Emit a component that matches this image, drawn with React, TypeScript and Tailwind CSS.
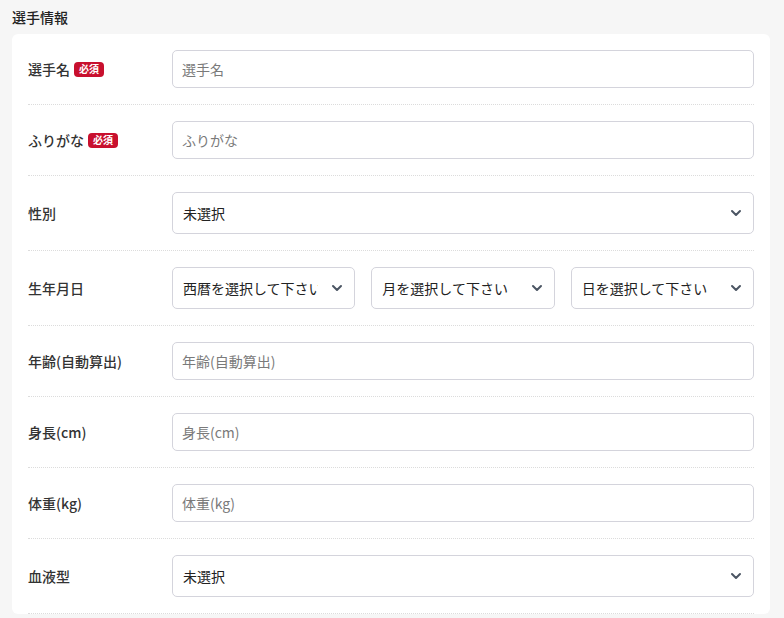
import React from 'react';

const FONT = { fontFamily: '"Noto Sans CJK JP", "Noto Sans", sans-serif' };

// 下向きシェブロン
const Chevron = () => (
  <svg
    className="pointer-events-none absolute right-[12px] top-1/2 -translate-y-1/2"
    width="12"
    height="12"
    viewBox="0 0 12 12"
    fill="none"
  >
    <path d="M2 4l4 4 4-4" stroke="#4b5563" strokeWidth="2" strokeLinecap="round" strokeLinejoin="round" />
  </svg>
);

const Required = () => (
  <span className="ml-[4px] inline-flex h-[15px] items-center rounded-[4px] bg-[#c8102e] px-[5px] text-[10px] font-bold leading-none text-white">
    必須
  </span>
);

const TextInput = ({ placeholder }: { placeholder: string }) => (
  <input
    type="text"
    placeholder={placeholder}
    className="h-[38px] w-full rounded-[5px] border border-[#d4d4dc] bg-white px-[9px] text-[14px] text-[#222] placeholder:text-[#7a7a7a] focus:outline-none"
    style={FONT}
  />
);

const Select = ({ options }: { options: string[] }) => (
  <div className="relative w-full">
    <select
      className="h-[42px] w-full appearance-none overflow-hidden rounded-[5px] border border-[#d4d4dc] bg-white pl-[10px] pr-[36px] text-[14px] text-[#222] focus:outline-none"
      style={FONT}
      defaultValue={options[0]}
    >
      {options.map((o) => (
        <option key={o}>{o}</option>
      ))}
    </select>
    <Chevron />
  </div>
);

const Row = ({ label, required, children }: { label: string; required?: boolean; children: React.ReactNode }) => (
  <div className="flex items-center border-b border-dotted border-[#dcdcdc] py-[16px]">
    <div className="flex w-[144px] shrink-0 items-center text-[14px] font-medium text-[#333]">
      {label}
      {required && <Required />}
    </div>
    <div className="flex-1">{children}</div>
  </div>
);

export default function App() {
  return (
    <div className="min-h-[618px] bg-[#f6f6f6] pl-[12px] pr-[14px] pt-[7px]" style={FONT}>
      <h2 className="mb-[7px] text-[14px] font-medium leading-[20px] text-[#222]">選手情報</h2>
      <div className="rounded-[6px] bg-white px-[16px]">
        <Row label="選手名" required>
          <TextInput placeholder="選手名" />
        </Row>
        <Row label="ふりがな" required>
          <TextInput placeholder="ふりがな" />
        </Row>
        <Row label="性別">
          <Select options={['未選択', '男性', '女性']} />
        </Row>
        <Row label="生年月日">
          <div className="grid grid-cols-3 gap-[16px]">
            <Select options={['西暦を選択して下さい']} />
            <Select options={['月を選択して下さい']} />
            <Select options={['日を選択して下さい']} />
          </div>
        </Row>
        <Row label="年齢(自動算出)">
          <TextInput placeholder="年齢(自動算出)" />
        </Row>
        <Row label="身長(cm)">
          <TextInput placeholder="身長(cm)" />
        </Row>
        <Row label="体重(kg)">
          <TextInput placeholder="体重(kg)" />
        </Row>
        <Row label="血液型">
          <Select options={['未選択', 'A型', 'B型', 'O型', 'AB型']} />
        </Row>
      </div>
    </div>
  );
}
